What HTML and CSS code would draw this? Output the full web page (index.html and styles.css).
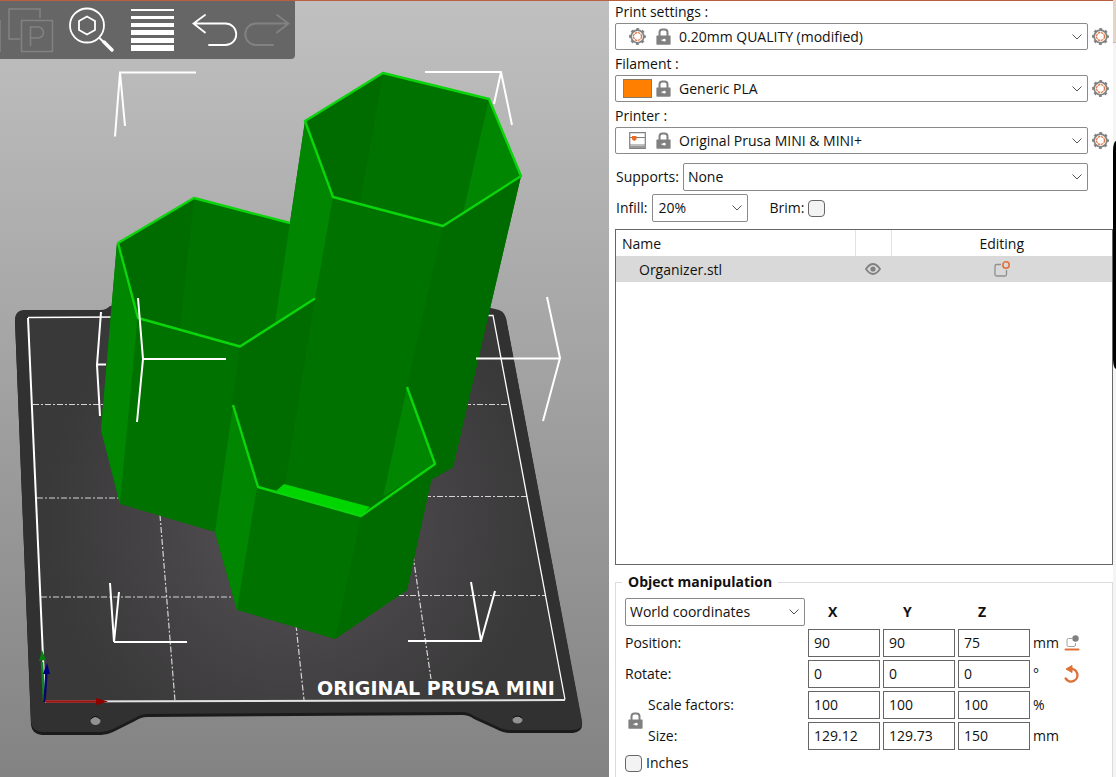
FILE: index.html
```html
<!DOCTYPE html>
<html lang="en">
<head>
<meta charset="utf-8">
<meta name="viewport" content="width=device-width, initial-scale=1">
<title>Organizer - Slicer</title>
<link rel="stylesheet" href="styles.css">
</head>
<body>
<svg class="defs" aria-hidden="true">
  <symbol id="gear" viewBox="0 0 17 17">
    <circle cx="8.500" cy="8.500" r="6.300" fill="none" stroke="#858585" stroke-width="1.800"/>
    <circle cx="8.500" cy="8.500" r="7.300" fill="none" stroke="#808080" stroke-width="2.200" stroke-dasharray="2.800 2.933" stroke-dashoffset="1.400"/>
    <circle cx="8.500" cy="8.500" r="4" fill="none" stroke="#e07a4a" stroke-width="1.300" stroke-dasharray="2.500 .640"/>
  </symbol>
  <symbol id="lock" viewBox="0 0 15 17">
    <path d="M3.500 8V4.500a3 3 0 0 1 3-3h2a3 3 0 0 1 3 3V8" fill="none" stroke="#808080" stroke-width="2"/>
    <path fill="#808080" d="M1 7.500h13a.6.6 0 0 1 .6.600V16a.8.8 0 0 1-.8.800H1.200a.8.800 0 0 1-.8-.8V8.100a.6.600 0 0 1 .6-.600z"/>
    <path d="M5.500 12.200h2" stroke="#fff" stroke-width="1.200"/>
    <circle cx="8.300" cy="12.200" r="1.400" fill="#fff"/>
  </symbol>
  <symbol id="printer" viewBox="0 0 17 17">
    <path d="M.7.700h15.600v15.600H.7z" fill="none" stroke="#808080" stroke-width="1.200"/>
    <path d="M.7 5.500h15.600M.7 13h15.600" stroke="#808080"/>
    <path d="M.7 15h15.600" stroke="#999" stroke-width="2"/>
    <path d="M3 4h4.500v3.500L5.300 9 3 7.500z" fill="#ed6b21"/>
  </symbol>
  <symbol id="chevron" viewBox="0 0 10 6">
    <path d="M.5.500 5 5 9.500.500" fill="none" stroke="#555"/>
  </symbol>
</svg>

<div class="app">
  <main class="viewport">
    <svg class="scene" viewBox="0 1 609 776" preserveAspectRatio="xMidYMid slice" role="img" aria-label="Organizer model on the print bed">
      <defs>
        <linearGradient id="sky" x1="0" y1="0" x2="0" y2="1">
          <stop offset="0" stop-color="#c0c0c0"/><stop offset="1" stop-color="#838383"/>
        </linearGradient>
        <radialGradient id="bed" gradientUnits="userSpaceOnUse" cx="295" cy="520" r="250">
          <stop offset="0" stop-color="#565456"/><stop offset=".45" stop-color="#484648"/><stop offset="1" stop-color="#3a393a"/>
        </radialGradient>
      </defs>
      <path fill="url(#sky)" d="M0 0h609v777H0z"/>

      <path fill="#1b1b1b" d="M15 321q0-9 8-10h78q5 0 9-4h372l13 3q9 1 11 9l76 404q1 9-9 10h-63q-7 0-14-4l-22-10q-5-4-12-4l-315 2q-6 0-12 4l-22 11q-6 3-12 3H42q-10-1-11-10z"/>
      <path fill="#313131" d="M15 320q0-9 8-10h78q5 0 9-4h372l13 3q9 1 11 9l76 403q1 9-9 9h-63q-7 0-14-4l-22-10q-5-4-12-4l-315 2q-6 0-12 4l-22 11q-6 3-12 3H42q-10-1-11-10z"/>
      <ellipse cx="95.500" cy="721" rx="5" ry="4" fill="#929292"/>
      <path d="M91 719q4-5 9 0" fill="none" stroke="#111"/>
      <ellipse cx="517.500" cy="720" rx="5" ry="3.500" fill="#929292"/>
      <path d="M513 718q4-4 9 0" fill="none" stroke="#111"/>
      <path fill="url(#bed)" d="m28 318 465-2 72 383-520 3z"/>
      <g fill="none" stroke="#d5d5d5" stroke-width="1.200" stroke-dasharray="6 2 2 2">
        <path d="M33 404.500h70M465 404.500h45M37 498h85M425 496.500h102M41 597h200M398 595.500h147M160 515l15 186M296 625l8 75M413 555l18 124"/>
      </g>
      <path d="m28 318 17 384" stroke="#fff" stroke-width="2"/>
      <path d="m28 317.500 90-.5M485 315.500h8l72 384" fill="none" stroke="#fff" stroke-width="1.300"/>
      <path d="m45 701.500 520-1.500" stroke="#e2e2e2" stroke-width="2"/>
      <text class="bed-name" x="317" y="695" fill="#fff">ORIGINAL PRUSA MINI</text>

      <path d="M44 701 42 662" stroke="#12861e" stroke-width="2.500"/>
      <path d="m39 661 3-11 4 10z" fill="#0a7d12"/>
      <path d="m44.500 702 2-30" stroke="#06066b" stroke-width="2.500"/>
      <path d="m43 674 4-11 3 11z" fill="#00007c"/>
      <path d="M46 701.500h52" stroke="#9c1515" stroke-width="2.500"/>
      <path d="m96 698 12 3.500-12 3.500z" fill="#8c0000"/>

      <path fill="#007200" d="m117 243 77-45 96 25 15-102 78-48 106 26 32 77-68 291-22 13-24 110-72 49-98-29-22-78-95-28-19-74z"/>
      <path fill="#006c00" d="m118 243 76-45-14 132-42-12z"/>
      <path fill="#008600" d="m117 243 20.500 75L120 504l-19-74z"/>
      <path fill="#006c00" d="m240 346 75-47-30 185-8 5-19-2-25-82-3 17z"/>
      <path fill="#008600" d="m305 121 28 76-18 102-40 24z"/>
      <path fill="#006c00" d="m305 121 78-48-23 131-27-7z"/>
      <path fill="#008600" d="m489 99 32 77-58 37z"/>
      <path fill="#006c00" d="m443 226 78-50-68 291-22 13 4-16-28-77z"/>
      <path fill="#008600" d="m233 405 24 82-20 123-22-78z"/>
      <path fill="#008600" d="m407 387 28 77-52 33z"/>
      <path fill="#006c00" d="m361 517 74-53-28 126-72 49z"/>
      <path fill="#00d500" d="m276 491 8-7 86 23-9 9z"/>
      <g fill="none" stroke="#0bd50b" stroke-width="2.400" stroke-linejoin="round">
        <path d="M290 223 194 198l-76 45 20 75 102 28.500 75-48"/>
        <path d="m305 121 78-48 106 26 32 77-78 50-110-29z"/>
        <path d="m233 405 25 82 103 29 74-52-28-77"/>
      </g>
      <g fill="none" stroke="#fff" stroke-width="2">
        <path d="M196 72.500h-76l-5 64M120 72l5 54M425 72h76l11 53M501 72l-7 32"/>
        <path d="m101 312-4 53 3 51M97 364.500h9M138 298l5 61-6 63M143 359h83M547 297l13 61-17 63M476 358.500h84"/>
        <path d="m110 583 4 59 5-50M114 642h73M471 582l10 59 14-50M408 641h74"/>
      </g>
    </svg>

    <nav class="toolbar" aria-label="View tools">
      <button type="button" aria-label="Paste" disabled>
        <svg width="57" height="58" viewBox="0 1 57 58" fill="none" stroke="#828282" stroke-width="1.500">
          <path d="M0 20v32M20 39H9V9h31v9M21.500 20.500h31v31h-31zM30.500 46V27H38a5.500 5.500 0 0 1 0 11h-7"/>
        </svg>
      </button>
      <button type="button" aria-label="Search">
        <svg width="65" height="58" viewBox="57 1 65 58" fill="none" stroke="#fff">
          <circle cx="87" cy="25.500" r="17" stroke-width="1.800"/>
          <path d="m87 16.500 8 4.500v9l-8 4.500-8-4.500v-9z" stroke-width="1.800"/>
          <path d="m99 37.500 5 5" stroke-width="2"/>
          <path d="m104 42 8 8" stroke-width="3.500" stroke-linecap="round"/>
        </svg>
      </button>
      <button type="button" aria-label="Variable layer height">
        <svg width="61" height="58" viewBox="122 1 61 58" fill="#fff">
          <path d="M131 9h43v2h-43zM131 16h43v3h-43zM131 23h43v4h-43zM131 30h43v5h-43zM131 38h43v5h-43zM131 45h43v6h-43z"/>
        </svg>
      </button>
      <button type="button" aria-label="Undo">
        <svg width="57" height="58" viewBox="183 1 57 58" fill="none" stroke="#fff" stroke-width="1.800" stroke-linecap="round">
          <path d="M205 15l-11.500 8.500L205 32.500M194 23.500h31.500a10.500 10.500 0 0 1 0 21.500H209"/>
        </svg>
      </button>
      <button type="button" aria-label="Redo" disabled>
        <svg width="55" height="58" viewBox="240 1 55 58" fill="none" stroke="#828282" stroke-width="1.800" stroke-linecap="round">
          <path d="m277 15 11.500 8.500L277 32.500M288 23.500h-32a10.500 10.500 0 0 0 0 21.500h17"/>
        </svg>
      </button>
    </nav>
  </main>

  <aside class="sidebar">
    <section class="presets">
      <div class="preset">
        <label for="print">Print settings :</label>
        <div class="preset-row">
          <div class="combo with-icons">
            <span class="icons"><svg class="icon" width="17" height="17"><use href="#gear"/></svg><svg class="lock" width="15" height="17"><use href="#lock"/></svg></span>
            <select id="print"><option>0.20mm QUALITY (modified)</option></select>
            <svg class="chevron" width="10" height="6"><use href="#chevron"/></svg>
          </div>
          <button type="button" aria-label="Edit print settings"><svg width="17" height="17"><use href="#gear"/></svg></button>
        </div>
      </div>
      <div class="preset">
        <label for="filament">Filament :</label>
        <div class="preset-row">
          <div class="combo with-icons">
            <span class="icons"><span class="swatch"></span><svg class="lock" width="15" height="17"><use href="#lock"/></svg></span>
            <select id="filament"><option>Generic PLA</option></select>
            <svg class="chevron" width="10" height="6"><use href="#chevron"/></svg>
          </div>
          <button type="button" aria-label="Edit filament"><svg width="17" height="17"><use href="#gear"/></svg></button>
        </div>
      </div>
      <div class="preset">
        <label for="printer-select">Printer :</label>
        <div class="preset-row">
          <div class="combo with-icons">
            <span class="icons"><svg class="icon" width="17" height="17"><use href="#printer"/></svg><svg class="lock" width="15" height="17"><use href="#lock"/></svg></span>
            <select id="printer-select"><option>Original Prusa MINI &amp; MINI+</option></select>
            <svg class="chevron" width="10" height="6"><use href="#chevron"/></svg>
          </div>
          <button type="button" aria-label="Edit printer"><svg width="17" height="17"><use href="#gear"/></svg></button>
        </div>
      </div>
    </section>

    <section class="options">
      <div class="option-row">
        <label for="supports">Supports:</label>
        <div class="combo">
          <select id="supports"><option>None</option></select>
          <svg class="chevron" width="10" height="6"><use href="#chevron"/></svg>
        </div>
      </div>
      <div class="option-row">
        <label for="infill">Infill:</label>
        <div class="combo infill">
          <select id="infill"><option>20%</option></select>
          <svg class="chevron" width="10" height="6"><use href="#chevron"/></svg>
        </div>
        <label class="brim" for="brim">Brim:</label>
        <input type="checkbox" id="brim">
      </div>
    </section>

    <div class="object-list">
      <table>
        <colgroup><col class="col-name"><col class="col-eye"><col></colgroup>
        <thead><tr><th scope="col">Name</th><th scope="col" aria-label="Visible"></th><th scope="col">Editing</th></tr></thead>
        <tbody>
          <tr>
            <td>Organizer.stl</td>
            <td><button type="button" aria-label="Toggle visibility"><svg width="16" height="12" viewBox="0 0 16 12"><path d="M1 6q7-10 14 0-7 10-14 0z" fill="none" stroke="#808080" stroke-width="1.800"/><circle cx="8" cy="6" r="2.600" fill="#808080"/></svg></button></td>
            <td><button type="button" aria-label="Edit object"><svg width="16" height="16" viewBox="0 0 16 16" fill="none"><path d="M7 3.500H2.500a1.500 1.500 0 0 0-1.500 1.500v8.500A1.500 1.500 0 0 0 2.500 15H11a1.500 1.500 0 0 0 1.500-1.500V9" stroke="#909090" stroke-width="1.300"/><circle cx="12" cy="4" r="3.200" stroke="#e2703a" stroke-width="1.600"/></svg></button></td>
          </tr>
        </tbody>
      </table>
    </div>

    <fieldset class="manipulation">
      <legend>Object manipulation</legend>
      <div class="grid">
        <div class="combo coords">
          <select aria-label="Coordinate system"><option>World coordinates</option></select>
          <svg class="chevron" width="10" height="6"><use href="#chevron"/></svg>
        </div>
        <b>X</b><b>Y</b><b>Z</b><span class="rest"></span>

        <label class="wide" for="pos-x">Position:</label>
        <input type="text" id="pos-x" value="90"><input type="text" aria-label="Position Y" value="90"><input type="text" aria-label="Position Z" value="75">
        <span>mm</span>
        <button type="button" aria-label="Drop to bed"><svg width="16" height="16" viewBox="0 0 16 16"><path d="M8 3.500H4.500A1.500 1.500 0 0 0 3 5v5a1.500 1.500 0 0 0 1.500 1.500h5.500A1.500 1.500 0 0 0 11.500 10V8" fill="none" stroke="#a0a0a0"/><circle cx="11.500" cy="3.500" r="3.200" fill="#808080"/><path d="M1.500 14.500h13" stroke="#e0703a" stroke-width="2" stroke-linecap="round"/></svg></button>

        <label class="wide" for="rot-x">Rotate:</label>
        <input type="text" id="rot-x" value="0"><input type="text" aria-label="Rotate Y" value="0"><input type="text" aria-label="Rotate Z" value="0">
        <span>°</span>
        <button type="button" aria-label="Reset rotation"><svg width="16" height="18" viewBox="0 0 16 18"><path d="M6 4a6.300 6.300 0 1 1-4.300 9.500" fill="none" stroke="#dd7238" stroke-width="2.400" stroke-linecap="round"/><path d="M2 4 8 .500v7z" fill="#dd7238" stroke="#dd7238" stroke-linejoin="round"/></svg></button>

        <button class="lock-button" type="button" aria-label="Lock proportions"><svg width="15" height="17"><use href="#lock"/></svg></button>
        <label for="scale-x">Scale factors:</label>
        <input type="text" id="scale-x" value="100"><input type="text" aria-label="Scale Y" value="100"><input type="text" aria-label="Scale Z" value="100">
        <span class="rest">%</span>

        <label for="size-x">Size:</label>
        <input type="text" id="size-x" value="129.12"><input type="text" aria-label="Size Y" value="129.73"><input type="text" aria-label="Size Z" value="150">
        <span class="rest">mm</span>
      </div>
      <div class="inches"><input type="checkbox" id="inches"><label for="inches">Inches</label></div>
    </fieldset>
  </aside>

  <div class="edge" aria-hidden="true"><i class="edge-tab"></i><i class="edge-thumb"></i></div>
</div>
</body>
</html>
```
FILE: styles.css
```css
* { box-sizing: border-box; }

body {
  margin: 0;
  background: #fff;
  color: #111;
  font: 14px/20px "Open Sans", "Noto Sans", sans-serif;
}

button, input, select { font: inherit; color: inherit; }

button {
  display: flex;
  align-items: center;
  justify-content: center;
  padding: 0;
  border: 0;
  background: none;
}

svg { display: block; flex: none; }

.defs { position: absolute; width: 0; height: 0; }

.app {
  display: flex;
  min-height: 100vh;
}

/* 3D view */
.viewport {
  position: relative;
  flex: 1;
  min-width: 0;
  overflow: hidden;
  border-top: 1px solid #b7603f;
}

.scene {
  position: absolute;
  inset: 0;
  width: 100%;
  height: 100%;
}

.bed-name { font: bold 19px "DejaVu Sans", sans-serif; }

.toolbar {
  position: absolute;
  top: 0;
  left: 0;
  display: flex;
  background: #666;
  border-bottom-right-radius: 4px;
}

/* Sidebar */
.sidebar {
  display: flex;
  flex-direction: column;
  width: 504px;
  padding-left: 6px;
  border-top: 1px solid #b7603f;
}

.presets {
  display: flex;
  flex-direction: column;
  gap: 3px;
}

.preset > label { display: block; line-height: 22px; }

.preset-row {
  display: flex;
  gap: 4px;
  padding-right: 4px;
}

.combo {
  position: relative;
  flex: 1;
  height: 28px;
}

.preset .combo { height: 27px; }

.combo select {
  appearance: none;
  display: block;
  width: 100%;
  height: 100%;
  padding: 0 24px 0 4px;
  border: 1px solid #8a8a8a;
  border-radius: 2px;
  background: #fff;
}

.combo.with-icons select { padding-left: 63px; }

.chevron {
  position: absolute;
  top: 11px;
  right: 6px;
  pointer-events: none;
}

.icons {
  position: absolute;
  inset: 0 auto 0 8px;
  display: flex;
  align-items: center;
  width: 48px;
  pointer-events: none;
}

.icons .icon { margin-left: 6px; }
.icons .lock { margin-left: auto; }

.swatch {
  width: 29px;
  height: 19px;
  border: 1px solid #8a7a6a;
  background: #ff8000;
}

.options {
  display: flex;
  flex-direction: column;
  gap: 3px;
  padding: 9px 25px 7px 1px;
}

.option-row {
  display: flex;
  align-items: center;
  gap: 4px;
}

.combo.infill { flex: 0 0 96px; }
.infill select { padding-left: 6px; }
.brim { margin-left: 18px; }

input[type="checkbox"] {
  appearance: none;
  width: 17px;
  height: 17px;
  margin: 0;
  border: 1px solid #666;
  border-radius: 4px;
  background: #f3f3f3;
}

.object-list {
  flex: 1;
  border: 1px solid #666;
}

.object-list table {
  width: 100%;
  table-layout: fixed;
  border-collapse: collapse;
}

.col-name { width: 239px; }
.col-eye { width: 36px; }

.object-list th {
  height: 26px;
  padding: 2px 6px 0;
  border-right: 1px solid #e2e2e2;
  font-weight: normal;
  text-align: left;
}

.object-list th:last-child { border-right: 0; text-align: center; }

.object-list td {
  height: 26px;
  padding: 0;
  background: #d9d9d9;
}

.object-list td:first-child { padding: 2px 0 0 23px; }
.object-list td button { margin: 0 auto; }

.manipulation {
  min-width: 0;
  margin: 7px 0 0;
  padding: 6px 9px 4px;
  border: 1px solid #dcdcdc;
  border-bottom: 0;
}

.manipulation legend {
  margin-left: -3px;
  padding: 0 6px;
  font-weight: bold;
}

.grid {
  display: grid;
  grid-template-columns: 20px 157px repeat(3, 72px) 28px auto;
  grid-auto-rows: 28px;
  gap: 3px;
  align-items: center;
  justify-content: start;
}

.grid b { padding-left: 20px; }
.coords { grid-column: span 2; }
.wide { grid-column: span 2; }
.rest { grid-column: span 2; }
.lock-button { grid-row: span 2; }

.grid input {
  width: 100%;
  height: 28px;
  padding: 0 5px 2px;
  border: 1px solid #666;
  background: #fff;
}

.inches {
  display: flex;
  align-items: center;
  gap: 4px;
  margin-top: 3px;
}

/* Sliver of the window behind */
.edge {
  display: flex;
  flex-direction: column;
  width: 3px;
  background: #f4f4f4;
}

.edge-tab {
  height: 43px;
  margin-bottom: 98px;
  border-bottom: 1px solid #c9b9a6;
  background: #e2d5c6;
}

.edge-thumb {
  height: 228px;
  border-radius: 3px 0 0 3px / 10px 0 0 10px;
  background: #000;
}
```
